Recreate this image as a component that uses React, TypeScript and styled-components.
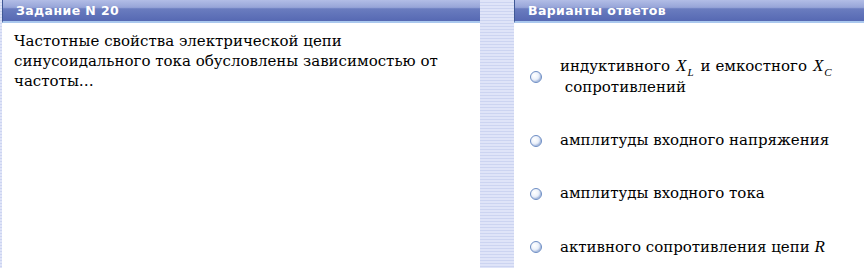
import styled, { createGlobalStyle } from 'styled-components';

const GlobalStyle = createGlobalStyle`
	html, body {
		margin: 0;
		padding: 0;
		width: 864px;
		height: 268px;
		overflow: hidden;
		background: white;
	}
`;

const Page = styled.div`
	width: 864px;
	height: 268px;
	display: grid;
	grid-template-columns: 478px 1fr;
	column-gap: 34px;
	padding-left: 2px;
	box-sizing: border-box;
	background: repeating-linear-gradient(to bottom, #dfe4f8 0 2px, #ccd4f1 2px 3px);
`;

const Panel = styled.section`
	display: flex;
	flex-direction: column;
	background: white;
	min-width: 0;
`;

const Header = styled.div`
	height: 21px;
	display: flex;
	align-items: center;
	border-left: 1px solid #3f5895;
	border-bottom: 2px solid #aac8ee;
	background: linear-gradient(to bottom, #b2bde6 0%, #97a5d8 35%, #6a7cbf 42%, #5669b3 100%);
`;

const HeaderTitle = styled.span`
	margin-left: 13px;
	color: white;
	font-family: 'DejaVu Sans', sans-serif;
	font-weight: bold;
	font-size: 12.5px;
	letter-spacing: 0.4px;
`;

const Question = styled.p`
	margin: 0;
	padding: 8px 12px 0 12px;
	font-family: 'DejaVu Serif', serif;
	font-size: 15px;
	line-height: 20px;
	color: black;
`;

const Options = styled.div`
	display: flex;
	flex-direction: column;
	gap: 32px;
	padding: 32px 0 0 16px;
`;

const Option = styled.label`
	display: flex;
	align-items: center;
	gap: 18px;
	font-family: 'DejaVu Serif', serif;
	font-size: 15px;
	line-height: 21px;
	color: black;
`;

const Radio = styled.span`
	flex: none;
	width: 10px;
	height: 10px;
	border-radius: 50%;
	border: 1px solid #6d8dc4;
	background: radial-gradient(circle at 35% 35%, #ffffff 0%, #eef3fb 40%, #b9cbea 100%);
	box-shadow: inset -1px -1px 1px rgba(90, 120, 180, 0.35);
`;

const MathVar = styled.i<{ $gap?: number }>`
	font-family: 'Liberation Serif', serif;
	font-style: italic;
	font-size: 17px;
	margin: 0 ${(p) => p.$gap ?? 6}px;
	letter-spacing: 1px;
`;

const Sub = styled.sub`
	font-size: 11px;
	vertical-align: -5px;
	line-height: 0;
`;

const answers = ['амплитуды входного напряжения', 'амплитуды входного тока'];

const App = () => (
	<>
		<GlobalStyle />
		<Page>
			<Panel>
				<Header>
					<HeaderTitle>Задание N 20</HeaderTitle>
				</Header>
				<Question>
					Частотные свойства электрической цепи синусоидального тока обусловлены зависимостью от
					частоты…
				</Question>
			</Panel>
			<Panel>
				<Header>
					<HeaderTitle>Варианты ответов</HeaderTitle>
				</Header>
				<Options>
					<Option>
						<Radio />
						<span>
							индуктивного<MathVar>
								X<Sub>L</Sub>
							</MathVar>и емкостного<MathVar>
								X<Sub>C</Sub>
							</MathVar>
							<br />
							&nbsp;сопротивлений
						</span>
					</Option>
					{answers.map((a) => (
						<Option key={a}>
							<Radio />
							<span>{a}</span>
						</Option>
					))}
					<Option>
						<Radio />
						<span>
							активного сопротивления цепи <MathVar $gap={0}>R</MathVar>
						</span>
					</Option>
				</Options>
			</Panel>
		</Page>
	</>
);

export default App;
